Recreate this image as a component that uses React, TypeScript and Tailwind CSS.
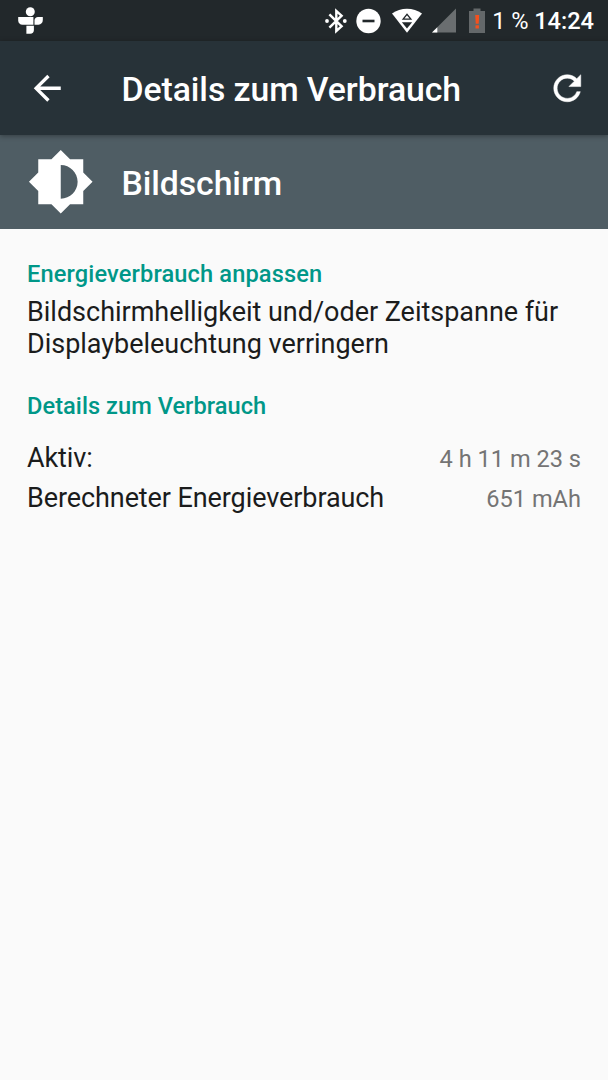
import { MdArrowBack, MdBrightnessMedium } from 'react-icons/md';

const details = [
  { label: 'Aktiv:', value: '4 h 11 m 23 s' },
  { label: 'Berechneter Energieverbrauch', value: '651 mAh' },
];

function StatusBar() {
  return (
    <div className="flex h-[41px] items-center bg-[#22282b] pl-[18px] pr-[14px] text-white">
      {/* Notification icon */}
      <svg className="h-[28px] w-[25px]" viewBox="0 0 25 28" fill="currentColor">
        <circle cx="12.3" cy="4.8" r="4.5" />
        <path d="M0.2 10.1H15.4V17.7H4.5C2 17.7 .2 15.8 .2 13.4Z" />
        <path d="M24.8 10.1V13.1C24.8 15.9 23 17.7 20.5 17.7H16.5V13.6C16.5 11.6 18 10.1 20 10.1Z" />
        <path d="M8.4 18.7H15.9V23.1C15.9 25.4 14.5 26.8 12.2 26.8H8.4Z" />
      </svg>

      <div className="ml-auto flex items-center">
        <svg className="h-[26px] w-[22px]" viewBox="0 0 22 26" fill="none" stroke="currentColor" strokeWidth="2.4">
          <path d="M4.4 6.3L16.6 18.3L11.3 23V3L16.6 7.7L4.4 19.7" />
          <circle cx="2" cy="13" r="1.9" fill="currentColor" stroke="none" />
          <circle cx="19.8" cy="13" r="1.9" fill="currentColor" stroke="none" />
        </svg>
        <svg className="ml-[9px] h-[26px] w-[25px]" viewBox="0 0 25 26">
          <circle cx="12.5" cy="13" r="12.2" fill="currentColor" />
          <rect x="6.5" y="11.7" width="12" height="2.6" fill="#22282b" />
        </svg>
        <svg className="ml-[11px] h-[26px] w-[30px]" viewBox="0 0 30 26">
          <path d="M0 5.5C8.5 -0.9 21.5 -0.9 30 5.5L15 24.8Z" fill="currentColor" />
          <path d="M11.1 11.2L15 6.3L18.9 11.2Z" fill="none" stroke="#22282b" strokeWidth="1.3" />
          <path d="M9.9 14.2H20.1L15 20.5Z" fill="#22282b" />
        </svg>
        <svg className="ml-[10px] h-[26px] w-[24px]" viewBox="0 0 24 26">
          <path d="M24 .5V24.5H0Z" fill="#6a6e70" />
          <path d="M5.3 19.2V24.5H0Z" fill="currentColor" />
        </svg>
        <svg className="ml-[13.5px] h-[26px] w-[16px]" viewBox="0 0 16 26">
          <path d="M4.5 .5H11.5V3H16V25H0V3H4.5Z" fill="#64686a" />
          <path d="M6.2 7H10.2L9.7 15.7H6.7Z" fill="#f4511e" />
          <rect x="6.5" y="17.3" width="3.4" height="3.2" fill="#f4511e" />
        </svg>
        <span className="ml-[7px] pt-[2px] text-[23.6px] leading-none">1 %</span>
        <span className="ml-[5.5px] pt-[2px] text-[23.6px] leading-none font-medium">14:24</span>
      </div>
    </div>
  );
}

function RefreshIcon() {
  return (
    <svg className="ml-auto size-[40.5px]" viewBox="0 0 24 24" fill="currentColor" stroke="currentColor" strokeWidth="0.3">
      <path d="M17.65 6.35C16.2 4.9 14.21 4 12 4c-4.42 0-7.99 3.58-7.99 8s3.57 8 7.99 8c3.73 0 6.84-2.55 7.73-6h-2.08c-.82 2.33-3.04 4-5.65 4-3.31 0-6-2.69-6-6s2.69-6 6-6c1.66 0 3.14.69 4.22 1.78L13 11h7V4l-2.35 2.35z" />
    </svg>
  );
}

function Toolbar() {
  return (
    <header className="relative flex h-[94px] items-center bg-[#273238] pl-[27px] pr-[21px] text-white shadow-[0_1px_5px_rgba(0,0,0,0.35)]">
      <MdArrowBack className="size-[40.5px]" />
      <h1 className="ml-[54px] pt-[3px] text-[33.8px] leading-none font-medium tracking-[-0.08px]">Details zum Verbrauch</h1>
      <RefreshIcon />
    </header>
  );
}

export default function App() {
  return (
    <div className="h-[1080px] w-[608px] overflow-hidden bg-[#fafafa] font-['Roboto',sans-serif]">
      <StatusBar />
      <Toolbar />

      {/* Selected consumer */}
      <div className="flex h-[94.4px] items-center bg-[#4f5d64] pl-[27px] text-white">
        <MdBrightnessMedium className="size-[67.5px]" />
        <h2 className="ml-[27px] pt-[3px] text-[33.8px] leading-none font-medium tracking-[-0.08px]">Bildschirm</h2>
      </div>

      <main className="px-[27px] pt-[30.6px] text-[27px] leading-[32px] text-[#1b1c1c]">
        <h3 className="text-[23.6px] leading-[28px] font-medium tracking-[0.14px] text-[#009788]">Energieverbrauch anpassen</h3>
        <p className="mt-[8px] tracking-[-0.02px]">
          Bildschirmhelligkeit und/oder Zeitspanne für
          <br />
          Displaybeleuchtung verringern
        </p>

        <h3 className="mt-[32.5px] text-[23.6px] leading-[28px] font-medium tracking-[0.05px] text-[#009788]">Details zum Verbrauch</h3>
        <div className="mt-[21.5px] flex flex-col gap-[7px]">
          {details.map((item) => (
            <div key={item.label} className="flex items-baseline justify-between">
              <span className="tracking-[-0.09px]">{item.label}</span>
              <span className="text-[23.6px] text-[#747474]">{item.value}</span>
            </div>
          ))}
        </div>
      </main>
    </div>
  );
}
